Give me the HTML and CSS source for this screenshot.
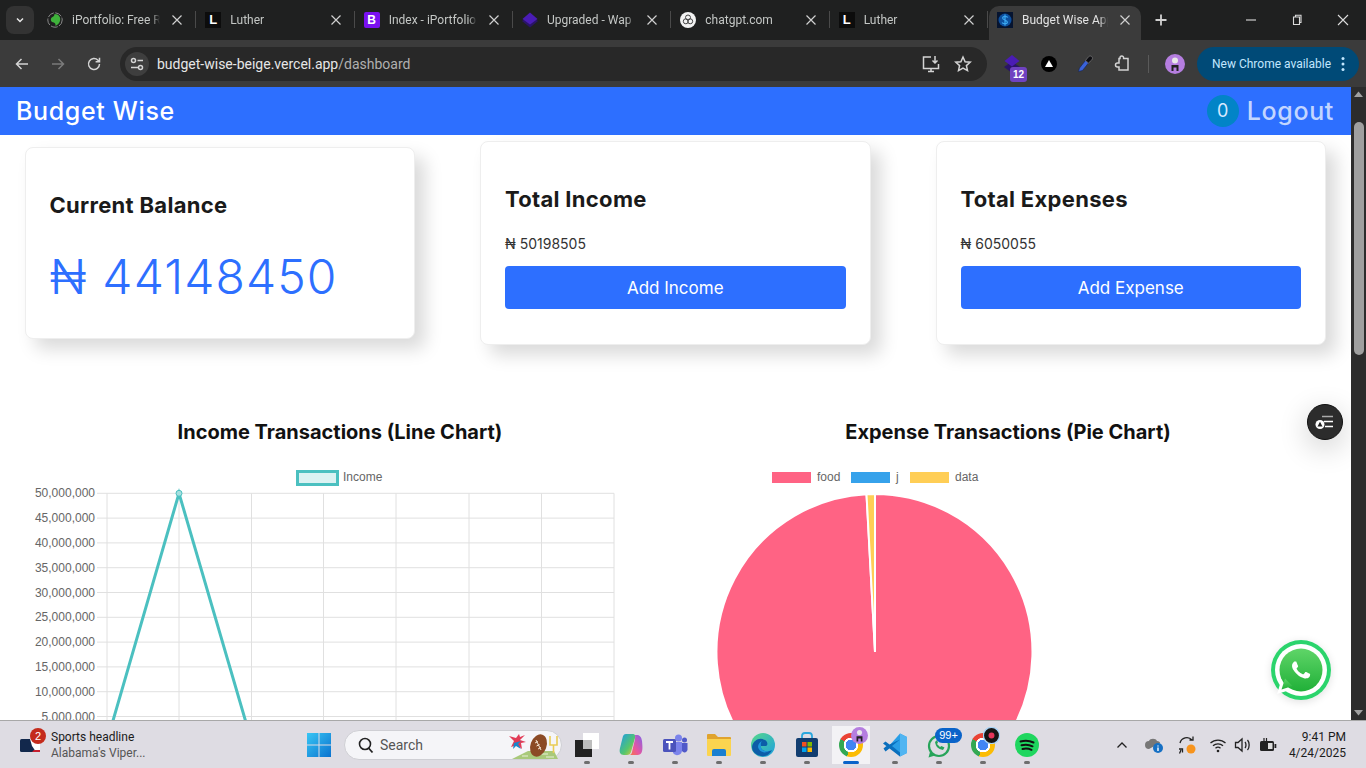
FILE: index.html
```html
<!DOCTYPE html>
<html lang="en">
<head>
<meta charset="utf-8">
<title>Budget Wise App</title>
<link rel="stylesheet" href="styles.css">
</head>
<body>
<div class="window">
  <header class="tabstrip">
    <button class="tab-menu"><svg width="12" height="12" viewBox="0 0 12 12"><path d="M3 4.500 6 7.500 9 4.500" class="ln-w"/></svg></button>
    <div class="tab">
      <svg class="fav" viewBox="0 0 16 16"><circle cx="8" cy="8" r="7.200" fill="none" stroke="#888" stroke-width="1" stroke-dasharray="7 1.500"/><path d="M7.500 2c4.500 0 6.500 3.500 5.500 7-.5 2-2.500 4-4.500 5 .3-2-.5-3.200-2.500-3.700C3.500 9.800 3 6 5.500 5 6.700 4.500 7.500 3.500 7.500 2z" fill="#3fb23b"/></svg>
      <span class="tab-title">iPortfolio: Free R</span><svg class="tab-x" viewBox="0 0 16 16"><path d="M3.500 3.500l9 9M12.500 3.500l-9 9"/></svg>
    </div>
    <div class="tab">
      <span class="fav fav-l">L</span>
      <span class="tab-title">Luther</span><svg class="tab-x" viewBox="0 0 16 16"><path d="M3.500 3.500l9 9M12.500 3.500l-9 9"/></svg>
    </div>
    <div class="tab">
      <span class="fav fav-b">B</span>
      <span class="tab-title">Index - iPortfolio</span><svg class="tab-x" viewBox="0 0 16 16"><path d="M3.500 3.500l9 9M12.500 3.500l-9 9"/></svg>
    </div>
    <div class="tab">
      <svg class="fav" viewBox="0 0 16 16"><path d="M8 3.500 16 9 8 15.500 0 9z" fill="#2a1468"/><path d="M8 .5 15.500 7 8 12.500.5 7z" fill="#4a1cb5"/></svg>
      <span class="tab-title">Upgraded - Wap</span><svg class="tab-x" viewBox="0 0 16 16"><path d="M3.500 3.500l9 9M12.500 3.500l-9 9"/></svg>
    </div>
    <div class="tab">
      <svg class="fav" viewBox="0 0 16 16"><circle cx="8" cy="8" r="8" fill="#f2f2f2"/><g fill="none" stroke="#444" stroke-width="1"><circle cx="8" cy="5.500" r="2.500"/><circle cx="10.200" cy="9.300" r="2.500"/><circle cx="5.800" cy="9.300" r="2.500"/></g></svg>
      <span class="tab-title">chatgpt.com</span><svg class="tab-x" viewBox="0 0 16 16"><path d="M3.500 3.500l9 9M12.500 3.500l-9 9"/></svg>
    </div>
    <div class="tab">
      <span class="fav fav-l">L</span>
      <span class="tab-title">Luther</span><svg class="tab-x" viewBox="0 0 16 16"><path d="M3.500 3.500l9 9M12.500 3.500l-9 9"/></svg>
    </div>
    <div class="tab tab-active">
      <svg class="fav" viewBox="0 0 16 16"><rect width="16" height="16" fill="#061430"/><circle cx="8" cy="8" r="6.500" fill="#0d4f9e"/><path d="M10.800 5.500C10 4 6 3.800 5.600 5.800 5.300 8 10.700 8 10.400 10.300 10 12.300 6 12 5.200 10.500M8 2.500v11" fill="none" stroke="#3aa7f0" stroke-width="1.300"/></svg>
      <span class="tab-title">Budget Wise App</span><svg class="tab-x" viewBox="0 0 16 16"><path d="M3.500 3.500l9 9M12.500 3.500l-9 9"/></svg>
    </div>
    <button class="tab-new"><svg width="14" height="14" viewBox="0 0 14 14"><path d="M7 1.500v11M1.500 7h11" class="ln-l"/></svg></button>
    <div class="win-controls">
      <button class="win-btn"><svg width="12" height="12" viewBox="0 0 12 12"><path d="M1 6h10" class="ln-t"/></svg></button>
      <button class="win-btn"><svg width="12" height="12" viewBox="0 0 12 12"><path d="M2.500 3H8.500V10.500H2.500zM4.500 3V1.200H10V8.500H8.500" class="ln-t"/></svg></button>
      <button class="win-btn"><svg width="12" height="12" viewBox="0 0 12 12"><path d="M1 1l10 10M11 1 1 11" class="ln-t"/></svg></button>
    </div>
  </header>

  <nav class="toolbar">
    <button class="tool"><svg width="16" height="16" viewBox="0 0 16 16"><path d="M14 8H2.500M7.500 3 2.500 8l5 5" class="ln-n"/></svg></button>
    <button class="tool"><svg width="16" height="16" viewBox="0 0 16 16"><path d="M2 8h11.500M8.500 3l5 5-5 5" class="ln-d"/></svg></button>
    <button class="tool"><svg width="16" height="16" viewBox="0 0 16 16"><path d="M13.500 8A5.500 5.500 0 1 1 12 4.200L13.500 5.700M13.500 1.800v3.900H9.600" class="ln-n"/></svg></button>
    <div class="omnibox">
      <span class="site-btn"><svg width="16" height="16" viewBox="0 0 16 16"><circle cx="4.500" cy="4.500" r="2" class="ln-n"/><path d="M8.500 4.500H14M2 11.500h7" class="ln-n"/><circle cx="11.500" cy="11.500" r="2" class="ln-n"/></svg></span>
      <span class="url">budget-wise-beige.vercel.app<span class="url-path">/dashboard</span></span>
      <span class="omni-icons">
        <svg width="20" height="20" viewBox="0 0 20 20"><path d="M10 3H2.500v11.500h15V10M7 17.500h6M10 14.500v3M14 2v6.500M11.500 6.500 14 9l2.500-2.500" class="ln-n"/></svg>
        <svg width="18" height="18" viewBox="0 0 18 18"><path d="M9 2l2.100 4.700 5.100.5-3.800 3.400 1.100 5L9 13l-4.500 2.600 1.100-5L1.800 7.200l5.100-.5z" class="ln-n"/></svg>
      </span>
    </div>
    <button class="tool ext">
      <svg width="20" height="20" viewBox="0 0 20 20"><path d="M9 7.500 17 13l-8 6-8-6z" fill="#2a1468"/><path d="M9 1l7.500 6L9 12.500 1.500 7z" fill="#4a1cb5"/></svg>
      <span class="ext-badge">12</span>
    </button>
    <button class="tool"><svg width="18" height="18" viewBox="0 0 18 18"><circle cx="9" cy="9" r="8" fill="#000"/><path d="M9 5l4 7H5z" fill="#fff"/></svg></button>
    <button class="tool"><svg width="18" height="18" viewBox="0 0 18 18"><path d="M2.500 16.500 3.500 13 9.500 5.500l3 2.500-6 7.500z" fill="#3a62d8" stroke="#16244f" stroke-width=".6"/><path d="M9.500 5.500 12.500 1.800c1.200-1.200 3-.9 3.700.3.600 1.100.2 2.100-.6 3L12.500 8z" fill="#0d0d12" stroke="#8a8a8a" stroke-width=".6"/></svg></button>
    <button class="tool tool-puzzle"><svg width="18" height="18" viewBox="0 0 18 18"><path d="M7 3.500V2.700a1.800 1.800 0 0 1 3.600 0v.8H15v11.500H6v-3H4.500a2 2 0 0 1 0-4H6V3.500z" class="ln-n"/></svg></button>
    <span class="tool-sep"></span>
    <button class="tool avatar-wrap">
      <svg width="20" height="20" viewBox="0 0 20 20"><circle cx="10" cy="10" r="10" fill="#b57ee0"/><circle cx="10" cy="6.500" r="3" fill="#e9e9e9"/><path d="M6.500 17v-6h7v6h-2v-3.500h-3V17z" fill="#222"/></svg>
    </button>
    <div class="update-pill">
      <span class="update-text">New Chrome available</span>
      <svg width="4" height="16" viewBox="0 0 4 16"><circle cx="2" cy="2.500" r="1.500" fill="#c2e7ff"/><circle cx="2" cy="8" r="1.500" fill="#c2e7ff"/><circle cx="2" cy="13.500" r="1.500" fill="#c2e7ff"/></svg>
    </div>
  </nav>

  <div class="viewport">
    <div class="page">
      <div class="navbar">
        <span class="brand">Budget Wise</span>
        <div class="nav-right">
          <span class="count">0</span>
          <span class="logout">Logout</span>
        </div>
      </div>

      <main class="content">
        <section class="cards">
          <article class="card">
            <h2 class="card-title">Current Balance</h2>
            <p class="balance">₦ 44148450</p>
          </article>
          <article class="card">
            <h2 class="card-title">Total Income</h2>
            <p class="amount">₦ 50198505</p>
            <button class="action">Add Income</button>
          </article>
          <article class="card">
            <h2 class="card-title">Total Expenses</h2>
            <p class="amount">₦ 6050055</p>
            <button class="action">Add Expense</button>
          </article>
        </section>

        <section class="charts">
          <div class="chart">
            <h3 class="chart-title">Income Transactions (Line Chart)</h3>
            <svg class="chart-svg" width="630" height="300" viewBox="0 0 630 300">
              <rect x="272.500" y="11.500" width="40" height="13" fill="#dbf2f2" stroke="#4bc0c0" stroke-width="3"/>
              <text x="318" y="21" class="tick">Income</text>
              <g class="grid">
                <path d="M72 33.300H589M72 58.100H589M72 82.900H589M72 107.700H589M72 132.500H589M72 157.300H589M72 182.100H589M72 206.900H589M72 231.700H589M72 256.500H589M72 281.300H589"/>
                <path d="M82 33.300V291M154 33.300V291M226.500 33.300V291M298.500 33.300V291M371 33.300V291M444 33.300V291M516.500 33.300V291M589 33.300V291"/>
              </g>
              <g class="tick" text-anchor="end">
                <text x="70" y="37.300">50,000,000</text>
                <text x="70" y="62.100">45,000,000</text>
                <text x="70" y="86.900">40,000,000</text>
                <text x="70" y="111.700">35,000,000</text>
                <text x="70" y="136.500">30,000,000</text>
                <text x="70" y="161.300">25,000,000</text>
                <text x="70" y="186.100">20,000,000</text>
                <text x="70" y="210.900">15,000,000</text>
                <text x="70" y="235.700">10,000,000</text>
                <text x="70" y="260.500">5,000,000</text>
              </g>
              <path d="M82 281.300 154 33.300 226.500 281.300" fill="none" stroke="#4bc0c0" stroke-width="3"/>
              <circle cx="154" cy="33.300" r="3" fill="#a5dfdf" stroke="#4bc0c0"/>
            </svg>
          </div>
          <div class="chart">
            <h3 class="chart-title">Expense Transactions (Pie Chart)</h3>
            <svg class="chart-svg" width="630" height="360" viewBox="0 0 630 360">
              <rect x="79" y="12" width="39" height="11" fill="#ff6384"/>
              <text x="124" y="21" class="tick">food</text>
              <rect x="158" y="12" width="39" height="11" fill="#36a2eb"/>
              <text x="203" y="21" class="tick">j</text>
              <rect x="217" y="12" width="39" height="11" fill="#ffce56"/>
              <text x="262" y="21" class="tick">data</text>
              <path d="M182 192V34A158 158 0 1 1 173.500 34.200Z" fill="#ff6384" stroke="#fff" stroke-width="2"/>
              <path d="M182 192 173.500 34.200A158 158 0 0 1 182 34Z" fill="#ffce56" stroke="#fff" stroke-width="2"/>
            </svg>
          </div>
        </section>
      </main>

      <button class="float-tool">
        <svg width="20" height="16" viewBox="0 0 20 16"><path d="M7 2.500h11" stroke="#aaa" stroke-width="1.500"/><path d="M9 7.500h9M10 12.500h8" stroke="#fff" stroke-width="1.500"/><circle cx="5" cy="10.500" r="4.500" fill="#fff"/><path d="M5 7.800 7.500 12.500h-5z" fill="#222"/></svg>
      </button>
      <a class="whatsapp">
        <svg width="60" height="60" viewBox="0 0 60 60">
          <defs><linearGradient id="wa" x1="0" y1="0" x2="0" y2="1"><stop offset="0" stop-color="#5fd568"/><stop offset="1" stop-color="#20b038"/></linearGradient></defs>
          <circle cx="30" cy="30" r="30" fill="#2bd46c"/>
          <circle cx="30" cy="30" r="26" fill="#fff"/>
          <path d="M6 54l4-13 9 9z" fill="#fff"/>
          <circle cx="30" cy="30" r="21.500" fill="url(#wa)"/>
          <path d="M10.500 49.500l3.500-11 7.500 7.500z" fill="url(#wa)"/>
          <g transform="translate(12 12) scale(1.500)"><path fill="#fff" d="M17.472 14.382c-.297-.149-1.758-.867-2.030-.967-.273-.099-.471-.148-.670.150-.197.297-.767.966-.940 1.164-.173.199-.347.223-.644.075-.297-.150-1.255-.463-2.390-1.475-.883-.788-1.480-1.761-1.653-2.059-.173-.297-.018-.458.130-.606.134-.133.298-.347.446-.520.149-.174.198-.298.298-.497.099-.198.050-.371-.025-.520-.075-.149-.669-1.612-.916-2.207-.242-.579-.487-.500-.669-.510-.173-.008-.371-.010-.570-.010-.198 0-.520.074-.792.372-.272.297-1.040 1.016-1.040 2.479 0 1.462 1.065 2.875 1.213 3.074.149.198 2.096 3.200 5.077 4.487.709.306 1.262.489 1.694.625.712.227 1.360.195 1.871.118.571-.085 1.758-.719 2.006-1.413.248-.694.248-1.289.173-1.413-.074-.124-.272-.198-.570-.347z"/></g>
        </svg>
      </a>
    </div>
    <aside class="scrollbar">
      <svg class="arrow" width="15" height="15" viewBox="0 0 15 15"><path d="M3 10 7.500 4.500 12 10z" fill="#a0a0a0"/></svg>
      <div class="thumb"></div>
      <svg class="arrow arrow-end" width="15" height="15" viewBox="0 0 15 15"><path d="M3 5h9L7.500 10.500z" fill="#a0a0a0"/></svg>
    </aside>
  </div>

  <footer class="taskbar">
    <div class="news">
      <span class="news-icon">
        <svg width="20" height="14" viewBox="0 0 20 14"><rect width="20" height="13" rx="1.500" fill="#12284c"/><path d="M10 0h10v13h-5c0-3-2-4-3-6z" fill="#fff"/><path d="M12 13h8v-2h-6z" fill="#c8202f"/></svg>
        <span class="news-badge">2</span>
      </span>
      <span class="news-text"><span class="news-head">Sports headline</span><span class="news-sub">Alabama's Viper...</span></span>
    </div>
    <button class="app start">
      <svg width="24" height="24" viewBox="0 0 24 24"><defs><linearGradient id="win" x1="0" y1="0" x2="1" y2="1"><stop offset="0" stop-color="#38c6f4"/><stop offset="1" stop-color="#0a72cf"/></linearGradient></defs><path d="M0 0h11.500v11.500H0zM12.500 0H24v11.500H12.500zM0 12.500h11.500V24H0zM12.500 12.500H24V24H12.500z" fill="url(#win)"/></svg>
    </button>
    <div class="search">
      <svg width="18" height="18" viewBox="0 0 18 18"><circle cx="8" cy="8" r="5.500" fill="none" stroke="#222" stroke-width="1.600"/><path d="M11.500 12 15.500 16.500" stroke="#222" stroke-width="1.800"/></svg>
      <span class="search-label">Search</span>
      <svg class="search-art" width="52" height="30" viewBox="0 0 52 30"><path d="M4 29 20 21H46L50 29z" fill="#a9c97a"/><path d="M14 26h6M28 24h12M38 27h8" stroke="#e8f0d8" stroke-width="1"/><path d="M42 6v9h7V6M45.500 15v8" fill="none" stroke="#e9cc55" stroke-width="1.600"/><path d="M17 5 12 10l6 2-5 1 1 6-5-4-6 2 3-6-5-5 7 2 3-4 1 3z" fill="#e23b56"/><path d="M6 13l7-2-3 3 3 5-5-3-3 3z" fill="#1a86c9"/><ellipse cx="30.500" cy="15.500" rx="8" ry="11.500" transform="rotate(20 30.500 15.500)" fill="#8b4a25"/><path d="M28 10l5 10M27 13l3-1.500M28.500 16l3-1.500M30 19l3-1.500" stroke="#f4e6d4" stroke-width="1"/></svg>
    </div>
    <button class="app">
      <svg width="26" height="26" viewBox="0 0 26 26"><rect x="1" y="8" width="17" height="17" fill="#222"/><rect x="9" y="1" width="16" height="16" fill="#fff"/><rect x="9" y="8" width="9" height="9" fill="#bdbdbd"/></svg>
    </button>
    <button class="app">
      <svg width="26" height="26" viewBox="0 0 26 26"><defs><linearGradient id="cp1" x1="0" y1="0" x2="1" y2="1"><stop offset="0" stop-color="#1c9be8"/><stop offset=".6" stop-color="#55c66d"/><stop offset="1" stop-color="#f7c531"/></linearGradient><linearGradient id="cp2" x1="1" y1="0" x2="0" y2="1"><stop offset="0" stop-color="#7f63ea"/><stop offset=".6" stop-color="#e9579f"/><stop offset="1" stop-color="#f6793c"/></linearGradient></defs><path d="M8 2h7c2 0 2.500 2 2 4l-4 14c-.7 2-2 3-4 3H6c-4 0-5-3-4-7l2.500-10C5 3.500 6 2 8 2z" fill="url(#cp1)"/><path d="M17 3h2c3 0 4.500 2.500 5 6 .5 5 1 10-1 12.500-1 1.500-3 1.500-5 1.500H11c2 0 2.500-1 3-3l3-13c.3-1.500 0-3.500 0-4.500z" fill="url(#cp2)"/></svg>
    </button>
    <button class="app">
      <svg width="26" height="26" viewBox="0 0 26 26"><circle cx="16.500" cy="6" r="3.500" fill="#7b83eb"/><circle cx="22.500" cy="8" r="2.500" fill="#5059c9"/><path d="M11 10h9v9a5 5 0 0 1-9 2z" fill="#7b83eb"/><path d="M20 11h5.500v7a3 3 0 0 1-5.500 1z" fill="#5059c9"/><rect x="1" y="7" width="13" height="13" rx="1.500" fill="#4b53bc"/><path d="M4 10h7M7.500 10v7.500" stroke="#fff" stroke-width="1.800"/></svg>
    </button>
    <button class="app">
      <svg width="26" height="26" viewBox="0 0 26 26"><path d="M1 3a1 1 0 0 1 1-1h7l3 3h12a1 1 0 0 1 1 1v3H1z" fill="#e0a32e"/><path d="M1 7h24v16a1 1 0 0 1-1 1H2a1 1 0 0 1-1-1z" fill="#fbd44f"/><path d="M6 19a2 2 0 0 1 2-2h10a2 2 0 0 1 2 2v5H6z" fill="#1a7fd0"/></svg>
    </button>
    <button class="app">
      <svg width="26" height="26" viewBox="0 0 26 26"><defs><linearGradient id="ed" x1="0" y1="0" x2="1" y2="1"><stop offset="0" stop-color="#56d88a"/><stop offset="1" stop-color="#1f9fe0"/></linearGradient></defs><circle cx="13" cy="13" r="12" fill="url(#ed)"/><path d="M2 15C3 8 10 5 15 8c3 2 3 5 1 6h-5c-1 3 3 6 8 5 1 0 2-.5 3-1-2 4-6 7-11 6C6 23 2 20 2 15z" fill="#0c5da8"/><path d="M11 14c-1 3 3 6 8 5-4 3-10 1-11-4 0-3 2-5 4-6-1 1-1.500 3-1 5z" fill="#1e97dc"/></svg>
    </button>
    <button class="app">
      <svg width="26" height="26" viewBox="0 0 26 26"><path d="M8 8V4a3 3 0 0 1 3-3h4a3 3 0 0 1 3 3v4" fill="none" stroke="#2aa7dd" stroke-width="1.800"/><rect x="2" y="6" width="22" height="19" rx="2" fill="#123d70"/><rect x="8" y="10" width="4.500" height="4.500" fill="#f25022"/><rect x="13.500" y="10" width="4.500" height="4.500" fill="#7fba00"/><rect x="8" y="15.500" width="4.500" height="4.500" fill="#00a4ef"/><rect x="13.500" y="15.500" width="4.500" height="4.500" fill="#ffb900"/></svg>
    </button>
    <button class="app app-active">
      <span class="chrome"></span>
      <svg class="app-overlay" width="17" height="17" viewBox="0 0 20 20"><circle cx="10" cy="10" r="10" fill="#b57ee0"/><circle cx="10" cy="6.500" r="3" fill="#e9e9e9"/><path d="M6.500 17v-6h7v6h-2v-3.500h-3V17z" fill="#222"/></svg>
    </button>
    <button class="app">
      <svg width="26" height="26" viewBox="0 0 26 26"><path d="M18 1.500 25 5v16l-7 3.500L7 14z" fill="#2a9ee6"/><path d="M18 1.500 25 5v16l-7 3.500z" fill="#51b5f2"/><path d="M18 7.500 10 14l8 6.500V24.500L1 11.500l2.500-2 4 3zM1.500 16.500l3.500-3 3 2.500L3.500 19.500z" fill="#0a6fbd"/></svg>
    </button>
    <button class="app">
      <svg width="26" height="26" viewBox="0 0 26 26"><circle cx="13" cy="14" r="10" fill="none" stroke="#27a45a" stroke-width="2.200"/><path d="M4 20 2.500 25.500 9 23.500z" fill="#27a45a"/><path d="M9 10c1 5 3 7 8 8l1.500-2.500-3-1.500-1.500 1-3-3 1-1.500L11 8z" fill="#27a45a"/></svg>
      <span class="app-count">99+</span>
    </button>
    <button class="app">
      <span class="chrome"></span>
      <svg class="app-overlay" width="17" height="17" viewBox="0 0 20 20"><circle cx="10" cy="10" r="9.500" fill="#151515" stroke="#a7d3f5" stroke-width="1.500"/><circle cx="10" cy="10" r="3.500" fill="#e3355a"/></svg>
    </button>
    <button class="app">
      <svg width="26" height="26" viewBox="0 0 26 26"><circle cx="13" cy="13" r="12" fill="#1fd65f"/><path d="M6.500 9.500c4-1.200 9-1 13 1M7.500 13.300c3.500-1 7.500-.8 11 1M8.500 17c3-.8 6-.6 9 .8" fill="none" stroke="#111" stroke-width="2" stroke-linecap="round"/></svg>
    </button>
    <div class="tray">
      <span class="tray-item tray-chev"><svg width="12" height="12" viewBox="0 0 12 12"><path d="M1.500 8.500 6 4l4.500 4.500" class="ln-b"/></svg></span>
      <span class="tray-item tray-wide"><svg width="20" height="18" viewBox="0 0 20 18"><path d="M4 13a4 4 0 0 1 0-8c1-3 7-3 8 0 2 0 3 1 3 2" fill="#777"/><circle cx="13" cy="12" r="5" fill="#1670c4"/><path d="M13 9.500v1M13 11.500v3.500" stroke="#fff" stroke-width="1.400"/></svg></span>
      <span class="tray-item tray-wide"><svg width="20" height="20" viewBox="0 0 20 20"><path d="M3 8a7 7 0 0 1 12-3M16 1.500V5h-3.500M4 15l-1.500 3.500M2 14h3.500V17.500" class="ln-b"/><circle cx="14" cy="14" r="4.500" fill="#f7941d"/></svg></span>
      <span class="tray-item tray-wifi"><svg width="18" height="16" viewBox="0 0 18 16"><path d="M1.500 6a11 11 0 0 1 15 0M4 8.800a7.300 7.300 0 0 1 10 0M6.500 11.300a3.600 3.600 0 0 1 5 0" class="ln-b"/><circle cx="9" cy="14" r="1.300" fill="#222"/></svg></span>
      <span class="tray-item"><svg width="18" height="16" viewBox="0 0 18 16"><path d="M1.500 5.500H4L8 2v12L4 10.500H1.500zM11 5c1.300 1.500 1.300 4.500 0 6M13.500 3c2.200 2.500 2.200 7.500 0 10" class="ln-b"/></svg></span>
      <span class="tray-item"><svg width="18" height="14" viewBox="0 0 18 14"><rect x="1" y="3" width="14" height="10" rx="1.500" fill="#222"/><rect x="15.500" y="6" width="1.800" height="4" fill="#222"/><rect x="9" y="5" width="4.500" height="6" fill="#ddd"/><path d="M5 0v3M7.500 0v3" stroke="#222" stroke-width="1.200"/></svg></span>
      <span class="clock"><span>9:41 PM</span><span>4/24/2025</span></span>
    </div>
  </footer>
</div>
</body>
</html>
```

FILE: styles.css
```css
* { box-sizing: border-box; }
html, body { margin: 0; height: 100%; overflow: hidden; }
body { font-family: Roboto, "Noto Sans", sans-serif; }
button { border: 0; padding: 0; background: none; font: inherit; cursor: default; }
h2, h3, p { margin: 0; }

.ln-w, .ln-l, .ln-n, .ln-d, .ln-t, .ln-b { fill: none; stroke-width: 1.500; }
.ln-w { stroke: #e8e8e8; stroke-width: 1.500; }
.ln-l { stroke: #d0d0d0; stroke-width: 1.800; }
.ln-n { stroke: #d4d4d4; }
.ln-d { stroke: #7b7b7b; }
.ln-t { stroke: #dcdcdc; stroke-width: 1.100; }
.ln-b { stroke: #222; stroke-width: 1.300; }

.window { width: 1366px; height: 768px; display: flex; flex-direction: column; overflow: hidden; background: #fff; }

/* Tab strip */
.tabstrip { height: 40px; flex: none; display: flex; align-items: flex-end; background: #1f2020; }
.tab-menu { width: 28px; height: 28px; margin: 0 5px 6px 6px; border-radius: 8px; background: #333; display: flex; align-items: center; justify-content: center; }
.tab { position: relative; width: 158.330px; height: 34px; padding: 0 12px 6px 8px; display: flex; align-items: center; gap: 9px; color: #c4c7c5; }
.tab::after { content: ""; position: absolute; right: 1px; top: 5px; width: 1px; height: 17px; background: #4a4a4a; }
.tab-active { width: 152px; padding-right: 8px; background: #3b3b3b; border-radius: 10px 10px 0 0; color: #e3e3e3; }
.tab-active::after, .tab:nth-of-type(7)::after { display: none; }
.fav { width: 16px; height: 16px; flex: none; }
.fav-l { background: #0c0c0c; color: #fff; font: 700 13px/16px "Liberation Sans", sans-serif; text-align: center; }
.fav-b { background: #7a10f0; color: #fff; border-radius: 2px; font: 700 12px/16px "Liberation Sans", sans-serif; text-align: center; }
.tab-title { flex: 1; min-width: 0; overflow: hidden; white-space: nowrap; font-size: 12px; line-height: 16px; -webkit-mask-image: linear-gradient(90deg, #000 90%, transparent); mask-image: linear-gradient(90deg, #000 90%, transparent); }
.tab-x { width: 16px; height: 16px; flex: none; fill: none; stroke: #d0d0d0; stroke-width: 1.200; }
.tab-new { width: 28px; height: 28px; margin: 0 0 6px 6px; display: flex; align-items: center; justify-content: center; }
.win-controls { margin-left: auto; height: 40px; display: flex; align-self: flex-start; }
.win-btn { width: 46px; height: 40px; display: flex; align-items: center; justify-content: center; }

/* Toolbar */
.toolbar { height: 47px; flex: none; display: flex; align-items: center; padding-left: 4px; background: #3b3b3b; }
.tool { position: relative; width: 36px; height: 34px; flex: none; display: flex; align-items: center; justify-content: center; }
.tool-puzzle { margin-left: 1px; }
.omnibox { width: 867px; height: 34px; margin: 0 8px; padding-left: 5px; display: flex; align-items: center; border-radius: 17px; background: #282828; }
.site-btn { width: 24px; height: 24px; border-radius: 50%; background: #3e3e3e; display: flex; align-items: center; justify-content: center; }
.url { margin-left: 8px; font-size: 14px; color: #e6e6e6; white-space: nowrap; }
.url-path { color: #b0b0b0; }
.omni-icons { margin-left: auto; padding-right: 15px; display: flex; align-items: center; gap: 13px; }
.ext-badge { position: absolute; left: 15px; top: 20px; width: 17px; height: 15px; border-radius: 3px; background: #6f42c1; color: #fff; font: 700 10px/15px "Liberation Sans", sans-serif; text-align: center; }
.tool-sep { width: 1px; height: 18px; margin: 0 8px 0 8px; background: #5a5a5a; }
.avatar-wrap { margin-right: 4px; }
.update-pill { width: 162px; height: 34px; padding: 0 14px 0 15px; display: flex; align-items: center; justify-content: space-between; border-radius: 17px; background: #004a77; }
.update-text { font-size: 12px; color: #c2e7ff; white-space: nowrap; }

/* Page viewport */
.viewport { flex: 1; min-height: 0; display: flex; }
.page { position: relative; flex: 1; min-width: 0; overflow: hidden; background: #fff; font-family: Inter, "Liberation Sans", sans-serif; }
.scrollbar { width: 15px; flex: none; display: flex; flex-direction: column; align-items: center; background: #2c2c2c; }
.thumb { width: 10px; height: 233px; margin-top: 20px; border-radius: 5px; background: #9f9f9f; }
.arrow { flex: none; }
.arrow-end { margin-top: auto; }

.navbar { height: 48px; display: flex; align-items: center; justify-content: space-between; padding: 0 17px 0 16px; background: #2d6fff; }
.brand { font-size: 25px; font-weight: 500; letter-spacing: .65px; color: #fff; }
.nav-right { display: flex; align-items: center; gap: 8px; }
.count { width: 32px; height: 32px; border-radius: 50%; background: #0284c7; color: #d6e8ff; font-size: 18px; line-height: 32px; text-align: center; }
.logout { font-size: 25px; font-weight: 500; letter-spacing: .65px; color: #c3d6ff; }

.content { padding: 6px 0 0 24.500px; }
.cards { display: grid; grid-template-columns: repeat(3, 390.500px); column-gap: 65px; align-items: center; }
.card { padding: 35px 24px; border: 1px solid #eeeeee; border-radius: 8px; background: #fff; box-shadow: 10px 10px 18px rgba(0, 0, 0, .15); }
.card-title { font-size: 22px; font-weight: 700; line-height: 44px; letter-spacing: .3px; color: #1a1a1a; }
.balance { margin-top: 24px; font-size: 48px; font-weight: 300; line-height: 52px; letter-spacing: 1.100px; color: #2d6fff; }
.amount { margin: 13px 0 12px; font-size: 14px; line-height: 20px; color: #333; }
.action { width: 100%; height: 43px; border-radius: 4px; background: #2d6fff; color: #fff; font-size: 17px; }

.charts { display: grid; grid-template-columns: 630px 630px; column-gap: 38px; margin-top: 71px; margin-left: .5px; }
.chart-title { font-size: 20px; font-weight: 700; line-height: 32px; text-align: center; color: #111; }
.chart-svg { display: block; margin-top: 12px; }
.grid path { fill: none; stroke: #e0e0e0; stroke-width: 1; }
.tick { font: 12px "Liberation Sans", sans-serif; fill: #666; }

.float-tool { position: absolute; left: 1307px; top: 317px; width: 36px; height: 36px; display: flex; align-items: center; justify-content: center; border-radius: 50%; background: #2c2c2c; border: 1px solid #111; box-shadow: 0 8px 30px rgba(0, 0, 0, .2); }
.whatsapp { position: absolute; left: 1271px; top: 553px; width: 60px; height: 60px; border-radius: 50%; box-shadow: 0 2px 8px rgba(0, 0, 0, .12); }

/* Taskbar */
.taskbar { height: 48px; flex: none; display: flex; align-items: center; border-top: 1px solid #a8a8a8; background: #dedce3; color: #1b1b1b; }
.news { width: 297px; flex: none; display: flex; align-items: center; padding-left: 20px; gap: 11px; }
.news-icon { position: relative; width: 20px; height: 14px; margin-top: 3px; }
.news-icon svg { display: block; }
.news-badge { position: absolute; left: 10px; top: -11px; width: 16px; height: 16px; border-radius: 50%; background: #c42b1c; color: #fff; font: 11px/16px "Liberation Sans", sans-serif; text-align: center; }
.news-text { display: flex; flex-direction: column; font-size: 12px; line-height: 16px; }
.news-sub { color: #555; }
.app { position: relative; width: 44px; height: 38px; flex: none; display: flex; align-items: center; justify-content: center; }
.app::after { content: ""; position: absolute; left: 19px; top: 35px; width: 6px; height: 3px; border-radius: 2px; background: #6e6e6e; }
.start::after { display: none; }
.start { margin-right: 3px; }
.app-active { background: linear-gradient(#f3f2f5, #f3f2f5) center / 38px 38px no-repeat; }
.app-active::after { left: 14px; top: 35px; width: 16px; background: #0a63c9; }
.search { width: 218px; height: 30px; margin-right: 3px; padding-left: 12px; display: flex; align-items: center; border: 1px solid #cfcfd4; border-radius: 15px; background: #f5f5f8; }
.search-label { margin-left: 5px; font-size: 14px; color: #555; }
.search-art { margin-left: auto; margin-right: 1px; }
.chrome { width: 24px; height: 24px; border-radius: 50%; background: radial-gradient(circle, #4285f4 0 31%, #fff 32% 43%, transparent 44%), conic-gradient(#ea4335 0 80deg, #fbbc04 80deg 200deg, #34a853 200deg 300deg, #ea4335 300deg); }
.app-overlay { position: absolute; left: 22px; top: 1px; }
.app-count { position: absolute; left: 18px; top: 2px; width: 27px; height: 15px; border-radius: 8px; background: #0a63c9; color: #fff; font: 11px/15px "Liberation Sans", sans-serif; text-align: center; }

.tray { margin-left: auto; padding-right: 20px; display: flex; align-items: center; }
.tray-item { width: 25px; height: 24px; display: flex; align-items: center; justify-content: center; }
.tray-chev { margin-right: 5px; }
.tray-wide { width: 32px; }
.tray-wifi { margin-left: 2px; }
.clock { width: 56px; margin-left: 10px; display: flex; flex-direction: column; align-items: flex-end; font-size: 12px; line-height: 16px; }
```
